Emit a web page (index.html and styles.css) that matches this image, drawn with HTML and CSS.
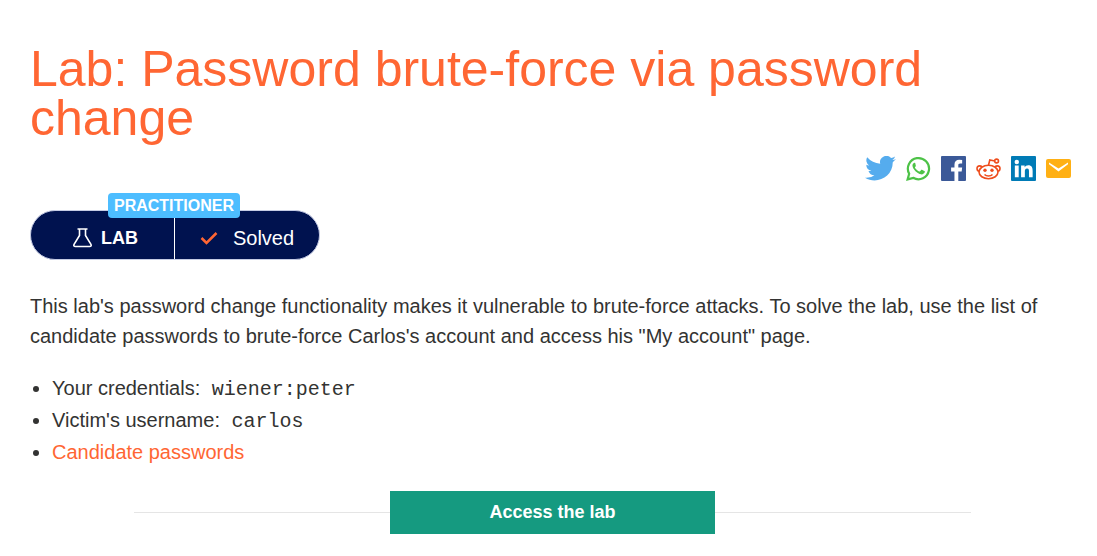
FILE: index.html
```html
<!DOCTYPE html>
<html lang="en">
<head>
<meta charset="utf-8">
<title>Lab: Password brute-force via password change</title>
<link rel="stylesheet" href="styles.css">
</head>
<body>
<main class="page">
  <h1 class="title">Lab: Password brute-force via password change</h1>
  <nav class="share" aria-label="Share">
    <a class="share-link" href="#" aria-label="Twitter"><svg width="31" height="25" viewBox="0 0 24 20" preserveAspectRatio="none"><path fill="#55acee" d="M24 2.400a9.800 9.800 0 0 1-2.800.8A5 5 0 0 0 23.300.4a9.900 9.900 0 0 1-3.100 1.200 4.900 4.900 0 0 0-8.400 4.500A14 14 0 0 1 1.700 1a4.900 4.900 0 0 0 1.500 6.500A4.900 4.900 0 0 1 1 6.900v.1a4.900 4.900 0 0 0 3.900 4.800 5 5 0 0 1-2.200.1 4.900 4.900 0 0 0 4.600 3.400A9.900 9.900 0 0 1 0 17.400C9 23 21.500 17 21.500 5z"/></svg></a>
    <a class="share-link" href="#" aria-label="WhatsApp"><svg width="25" height="25" viewBox="0 0 26 26"><path fill="none" stroke="#4dc247" stroke-width="2.300" d="M1.700 24.300l1.600-5.900A11 11 0 1 1 7.500 22.700z"/><path fill="#4dc247" d="M9 7c-.9-.2-2.400 1.300-2.300 3 .2 3.900 5.300 8.700 9 9.100 1.800.2 3.700-1.100 3.900-2.400.1-.7 0-.9-.5-1.100l-2.500-1.200c-.5-.2-.8 0-1 .3l-1 1.200c-.3.300-.6.300-1 .1-1.900-.8-3.200-2-4.200-3.700-.2-.4-.1-.6.100-.9.900-1 .9-1.200.6-1.800L9.600 7.300z"/></svg></a>
    <a class="share-link" href="#" aria-label="Facebook"><svg width="25" height="25" viewBox="0 0 26 26"><rect width="26" height="26" rx="1" fill="#3b5998"/><path fill="#fff" d="M14 26V16h-3.500v-4H14V9c0-3.300 2-5 5-5l3 .2v3.500h-2c-1.600 0-2 .8-2 1.900V12h4l-.5 4H18v10z"/></svg></a>
    <a class="share-link" href="#" aria-label="Reddit"><svg width="25" height="25" viewBox="0 0 25 25"><g fill="#fff" stroke="#ee4d1d" stroke-width="1.600"><circle cx="3.700" cy="12.600" r="2.700"/><circle cx="21.300" cy="12.600" r="2.700"/><ellipse cx="12.500" cy="16" rx="9.500" ry="6.700"/><path fill="none" d="M12.500 9.300l1.300-5.300 5 1M8.500 18.500c2 1.900 6 1.900 8 0"/><circle cx="20.600" cy="5" r="1.900"/></g><g fill="#ee4d1d"><circle cx="9" cy="14.300" r="1.700"/><circle cx="16" cy="14.300" r="1.700"/></g></svg></a>
    <a class="share-link" href="#" aria-label="LinkedIn"><svg width="25" height="25" viewBox="0 0 26 26"><rect width="26" height="26" rx="1" fill="#007bb6"/><g fill="#fff"><circle cx="6" cy="6.200" r="2.300"/><path d="M4 10h4v12H4zM10.500 10h3.700v1.700c.7-1.200 2-2 3.700-2 3.800 0 4.600 2.500 4.600 5.700V22h-3.800v-5.800c0-1.500 0-3.200-2-3.200s-2.300 1.500-2.300 3.100V22h-3.900z"/></g></svg></a>
    <a class="share-link" href="#" aria-label="Email"><svg width="25" height="25" viewBox="0 0 25 25"><rect y="3" width="25" height="19" rx="2" fill="#ffb014"/><path fill="#fff" d="M3 6.500l9.500 6 9.500-6v1.800l-9.500 7.200L3 8.300z"/></svg></a>
  </nav>
  <div class="status">
    <span class="level">PRACTITIONER</span>
    <div class="pill">
      <span class="kind"><svg width="19" height="20" viewBox="0 0 19 20" fill="none" stroke="#fff" stroke-width="1.600" stroke-linejoin="round"><path d="M4.500 1h10M6.500 1v6.500L1.200 16.200q-1.200 2.300 1.300 2.300h14q2.500 0 1.300-2.300L12.500 7.500V1"/></svg>LAB</span>
      <span class="state"><svg width="18" height="14" viewBox="0 0 18 14" fill="none" stroke="#ff6633" stroke-width="2.500"><path d="M1.500 7l5 5L16.500 2"/></svg>Solved</span>
    </div>
  </div>
  <p class="intro">This lab's password change functionality makes it vulnerable to brute-force attacks. To solve the lab, use the list of candidate passwords to brute-force Carlos's account and access his "My account" page.</p>
  <ul class="details">
    <li>Your credentials: <code>wiener:peter</code></li>
    <li>Victim's username: <code>carlos</code></li>
    <li><a href="#">Candidate passwords</a></li>
  </ul>
  <div class="launch"><a class="access" href="#">Access the lab</a></div>
</main>
</body>
</html>
```
FILE: styles.css
```css
* { box-sizing: border-box; }
body { margin: 0; background: #fff; color: #333332; font-family: "Liberation Sans", Arial, sans-serif; font-size: 20px; }
.page { padding: 45px 26px 22px 30px; }
.title { margin: 0; color: #ff6633; font-size: 50px; line-height: 49px; font-weight: 400; }
.share { display: flex; justify-content: flex-end; align-items: center; gap: 10px; margin-top: 13px; }
.share-link, .share-link svg { display: block; }
.status { position: relative; width: 290px; margin-top: 29px; }
.level { position: absolute; left: 78px; top: -17px; padding: 0 6px; border-radius: 4px; background: #4dbdff; color: #fff; font-size: 16px; line-height: 25px; font-weight: 700; }
.pill { display: flex; height: 50px; border: 1px solid #c5cbe4; border-radius: 25px; background: #00124f; color: #fff; overflow: hidden; }
.kind, .state { display: flex; width: 50%; align-items: center; justify-content: center; padding-top: 6px; }
.kind { gap: 9px; padding-left: 6px; border-right: 1px solid #fff; font-size: 18px; font-weight: 700; }
.state { gap: 15px; }
.intro { margin: 31px 0 0; line-height: 30px; }
.details { margin: 21px 0 0; padding: 0 0 0 22px; line-height: 32px; }
.details code { margin-left: 6px; font-family: "Liberation Mono", "Courier New", monospace; line-height: 20px; }
.details a { color: #ff6633; text-decoration: none; }
.launch { display: flex; align-items: center; justify-content: center; margin: 23px 100px 0 104px; }
.launch::before, .launch::after { content: ""; flex: 1; height: 1px; background: #e5e5e5; }
.access { width: 325px; background: #159a80; color: #fff; font-size: 18px; line-height: 43px; font-weight: 700; text-align: center; text-decoration: none; }
```
